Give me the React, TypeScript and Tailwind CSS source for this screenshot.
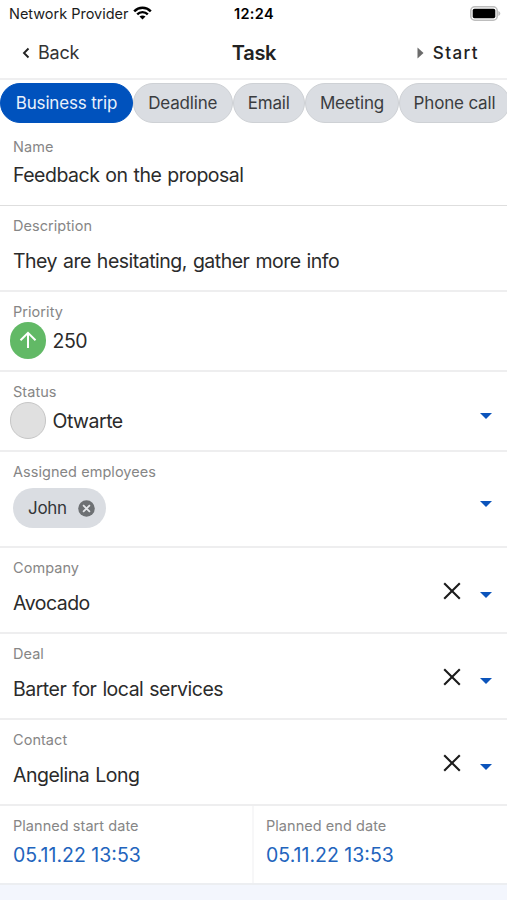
import type { ReactNode } from "react";

const taskTypes = [
  { label: "Business trip", size: "w-[133px]", active: true },
  { label: "Deadline", size: "w-[99.5px]", active: false },
  { label: "Email", size: "w-[72.5px]", active: false },
  { label: "Meeting", size: "w-[94px]", active: false },
  { label: "Phone call", size: "w-[111px]", active: false },
];

type FieldProps = {
  label: string;
  height: string;
  controls?: ReactNode;
  children: ReactNode;
};

function StatusBar() {
  return (
    <div className="flex h-7 items-center text-black">
      <div className="flex w-[200px] items-center pl-[9px]">
        <span className="text-[14.5px] tracking-[-0.02px] text-[#1c1c1c]">
          Network Provider
        </span>
        <svg className="mb-[2px] ml-[5px] h-[14px] w-[19px]" viewBox="0 0 19 14" fill="none">
          <path d="M1.2 5.3C5.8 .7 13.2 .7 17.8 5.3" stroke="currentColor" strokeWidth="2.5" />
          <path d="M4.2 8.3C7.1 5.4 11.9 5.4 14.8 8.3" stroke="currentColor" strokeWidth="2.4" />
          <path d="M6.5 10.6C8.2 9 10.8 9 12.5 10.6L9.5 13.6Z" fill="currentColor" />
        </svg>
      </div>
      <div className="w-[108px] text-center text-[14.5px] font-semibold tracking-[0.3px]">
        12:24
      </div>
      <div className="flex flex-1 justify-end pr-[6px] pb-[2px]">
        <svg className="h-[15px] w-[31px]" viewBox="0 0 31 15">
          <rect x=".8" y=".8" width="26.4" height="13.4" rx="4" fill="#fff" stroke="#bdbdbd" strokeWidth="1.6" />
          <rect x="2.7" y="2.7" width="22.6" height="9.6" rx="1.8" fill="#000" />
          <path d="M28.3 5v5c1.2-.4 2-1.3 2-2.5s-.8-2.1-2-2.5Z" fill="#bdbdbd" />
        </svg>
      </div>
    </div>
  );
}

function Header() {
  return (
    <header className="flex h-[52px] items-center border-b-2 border-[#efeff0] pb-[1px]">
      <button className="flex w-[200px] items-center pl-[22px] text-[18px] tracking-[-0.2px] text-[#333]">
        <svg className="mr-[8px] h-[12px] w-[8px]" viewBox="0 0 8 12" fill="none">
          <path d="M6.5 1.5L2 6l4.5 4.5" stroke="#222" strokeWidth="1.9" />
        </svg>
        Back
      </button>
      <h1 className="w-[108px] text-center text-[20px] font-semibold tracking-[-0.3px] text-[#222]">
        Task
      </h1>
      <button className="flex flex-1 items-center justify-end pr-[28px] text-[17px] font-medium tracking-[1.4px] text-[#222]">
        <svg className="mr-[9px] h-[12px] w-[7px]" viewBox="0 0 7 12">
          <path d="M.5 .5L6.5 6l-6 5.5Z" fill="#6b6b6b" />
        </svg>
        <span className="pt-[2px]">Start</span>
      </button>
    </header>
  );
}

function Arrow() {
  return (
    <svg className="mt-[10px] h-[6px] w-[12px]" viewBox="0 0 12 6">
      <path d="M0 0h12L6 6Z" fill="#0b54bb" />
    </svg>
  );
}

function Clear() {
  return (
    <svg className="mt-[2px] mr-[19px] h-[18px] w-[18px]" viewBox="0 0 18 18" fill="none">
      <path d="M1.2 1.2l15.6 15.6M16.8 1.2L1.2 16.8" stroke="#1c1c1c" strokeWidth="2.1" />
    </svg>
  );
}

function Label({ children }: { children: ReactNode }) {
  return (
    <div className="h-[18px] text-[14.5px] leading-[18px] tracking-[0.05px] text-[#868686]">
      {children}
    </div>
  );
}

function Field({ label, height, controls, children }: FieldProps) {
  return (
    <div className={`flex border-b-2 border-[#eeeeef] ${height}`}>
      <div className="flex flex-1 flex-col pt-[11px] pl-[13px]">
        <Label>{label}</Label>
        {children}
      </div>
      {controls && <div className="flex items-center pr-[15px]">{controls}</div>}
    </div>
  );
}

function Value({ children }: { children: ReactNode }) {
  return (
    <div className="pt-[14px] text-[19.5px] leading-6 tracking-[-0.5px] text-[#2b2b2b] [word-spacing:1px]">
      {children}
    </div>
  );
}

export default function App() {
  return (
    <div className="h-[900px] w-[507px] overflow-hidden bg-white font-['Inter',sans-serif]">
      <StatusBar />
      <Header />

      <div className="flex h-[46px] overflow-hidden pt-[3px]">
        {taskTypes.map((type) => (
          <div
            key={type.label}
            className={`flex h-10 shrink-0 items-center justify-center rounded-full border pt-[1px] text-[17px] tracking-[-0.17px] ${type.size} ${
              type.active
                ? "border-[#0052bd] bg-[#0052bd] text-[#e9f1fb]"
                : "border-[#ced1d5] bg-[#dadde2] text-[#3a3c3f]"
            }`}
          >
            {type.label}
          </div>
        ))}
      </div>

      <div className="flex h-20 flex-col border-b border-[#dedede] pt-3 pl-[13px]">
        <Label>Name</Label>
        <div className="pt-[7px] text-[19.5px] leading-6 tracking-[-0.5px] text-[#2b2b2b] [word-spacing:1px]">
          Feedback on the proposal
        </div>
      </div>

      <Field label="Description" height="h-[86px]">
        <Value>They are hesitating, gather more info</Value>
      </Field>

      <Field label="Priority" height="h-20">
        <div className="-ml-[3.5px] flex items-center pt-[1px] text-[19.5px] tracking-[-0.5px] text-[#2b2b2b]">
          <div className="mr-[6.5px] flex h-[36.5px] w-[36.5px] items-center justify-center rounded-full bg-[#62b966]">
            <svg className="h-[18px] w-[18px]" viewBox="0 0 18 18" fill="none">
              <path d="M9 17V2M1.5 9.2L9 1.8l7.5 7.4" stroke="#fff" strokeWidth="2" />
            </svg>
          </div>
          <span className="pt-[2px]">250</span>
        </div>
      </Field>

      <Field label="Status" height="h-20" controls={<Arrow />}>
        <div className="-ml-[3.5px] flex items-center pt-[1px] text-[19.5px] tracking-[-0.5px] text-[#2b2b2b]">
          <div className="mr-[6.5px] h-[36.5px] w-[36.5px] rounded-full border-[1.5px] border-[#c6c6c6] bg-[#e0e0e0]" />
          <span className="pt-[2px]">Otwarte</span>
        </div>
      </Field>

      <Field label="Assigned employees" height="h-24" controls={<Arrow />}>
        <div className="mt-[7px] flex h-10 w-[93px] items-center rounded-full bg-[#dadde2] pl-[15px] text-[17px] tracking-[-0.3px] text-[#333538]">
          <span className="pt-[2px]">John</span>
          <svg className="ml-[11px] h-[17px] w-[17px]" viewBox="0 0 17 17" fill="none">
            <circle cx="8.5" cy="8.5" r="8.3" fill="#6d7073" />
            <path d="M5.1 5.1l6.8 6.8M11.9 5.1l-6.8 6.8" stroke="#e4e6e9" strokeWidth="1.8" />
          </svg>
        </div>
      </Field>

      <Field label="Company" height="h-[86px]" controls={<><Clear /><Arrow /></>}>
        <Value>Avocado</Value>
      </Field>

      <Field label="Deal" height="h-[86px]" controls={<><Clear /><Arrow /></>}>
        <Value>Barter for local services</Value>
      </Field>

      <Field label="Contact" height="h-[86px]" controls={<><Clear /><Arrow /></>}>
        <Value>Angelina Long</Value>
      </Field>

      <div className="flex h-[79px] border-b-2 border-[#eceef1]">
        {["Planned start date", "Planned end date"].map((label, index) => (
          <div
            key={label}
            className={`pt-[11px] ${index === 0 ? "w-[254px] border-r-2 border-[#f7f7f8] pl-[13px]" : "pl-[12px]"}`}
          >
            <Label>{label}</Label>
            <div className="pt-[8px] text-[19.5px] leading-6 text-[#2264bd]">
              05.11.22 13:53
            </div>
          </div>
        ))}
      </div>
      <div className="h-[15px] bg-[#f3f6fd]" />
    </div>
  );
}
